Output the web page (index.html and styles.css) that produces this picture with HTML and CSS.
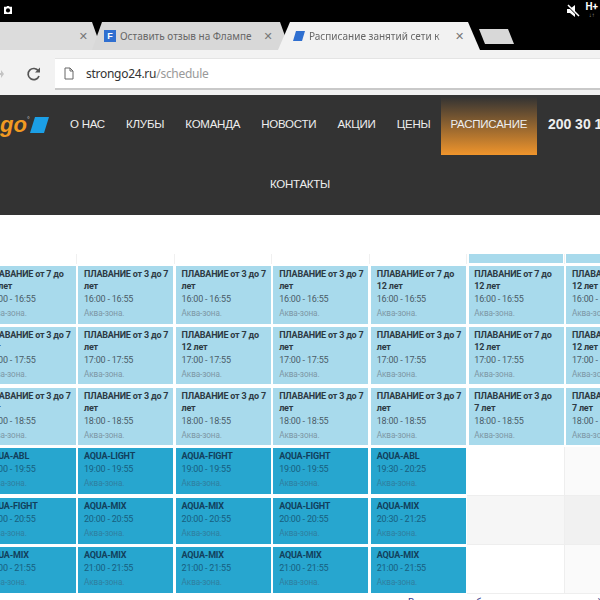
FILE: index.html
```html
<!DOCTYPE html>
<html lang="en">
<head>
  <meta charset="UTF-8" />
  <title>Расписание занятий</title>
  <link rel="stylesheet" href="styles.css">
</head>
<body>
  <!-- Android status bar -->
  <div class="status">
    <svg class="status-shot" width="8" height="8" viewBox="0 0 10 10"><path fill="#fff" d="M0 1h3l1-1h2l1 1h3v9H0z"/><circle cx="5" cy="5.500" r="2.600" fill="#000"/></svg>
    <div class="status-right">
      <svg width="14" height="14" viewBox="0 0 14 14"><path fill="#fff" d="M1 5h3l5-4v12L4 9H1z"/><path stroke="#000" stroke-width="1.500" d="M1 1l12 12"/><path stroke="#fff" stroke-width="1.500" d="M2 1l11 11"/></svg>
      <div class="signal"><b>H+</b><span>↓↑</span></div>
    </div>
  </div>

  <!-- Browser tabs -->
  <div class="tabs">
    <div class="tab tab-first"><span class="tab-close">✕</span></div>
    <div class="tab tab-second">
      <span class="favicon-flamp">F</span>
      <span class="tab-title">Оставить отзыв на Флампе</span>
      <span class="tab-close">✕</span>
    </div>
    <div class="tab tab-active">
      <svg width="12" height="10" viewBox="0 0 12 10"><path fill="#2f6fd0" d="M3 0h9l-3 10H0z"/></svg>
      <span class="tab-title tab-title-cut">Расписание занятий сети к</span>
      <span class="tab-close">✕</span>
    </div>
    <div class="tab-new"></div>
  </div>

  <!-- Browser toolbar -->
  <div class="toolbar">
    <svg class="forward" width="4" height="8" viewBox="0 0 4 8"><path fill="#c4c4c4" d="M0 3h1V0l3 4-3 4V5H0z"/></svg>
    <svg class="reload" width="16" height="16" viewBox="0 0 16 16"><path fill="none" stroke="#555" stroke-width="1.700" d="M13 10a5.600 5.600 0 1 1-.6-5"/><path fill="#555" d="M14 1.500v5h-5z"/></svg>
    <div class="urlbar">
      <svg width="10" height="13" viewBox="0 0 10 13"><path fill="#fff" stroke="#666" d="M1 1h5l3 3v8H1z"/><path fill="none" stroke="#666" d="M6 1v3h3"/></svg>
      <span class="url">strongo24.ru<span class="url-path">/schedule</span></span>
    </div>
  </div>

  <!-- Site header -->
  <header class="site-header">
    <div class="nav-row">
      <div class="logo">
        <span class="logo-text">go</span><span class="logo-reg">°</span>
        <span class="logo-mark"></span>
      </div>
      <nav class="nav">
        <a>О НАС</a>
        <a>КЛУБЫ</a>
        <a>КОМАНДА</a>
        <a>НОВОСТИ</a>
        <a>АКЦИИ</a>
        <a>ЦЕНЫ</a>
        <a class="active">РАСПИСАНИЕ</a>
      </nav>
      <div class="phone">200 30 11</div>
    </div>
    <div class="nav-row-second"><a>КОНТАКТЫ</a></div>
  </header>

  <!-- Schedule -->
  <main class="schedule">
    <div class="head"></div><div class="head"></div><div class="head"></div><div class="head"></div><div class="head"></div>
    <div class="head"><div class="stub"></div></div>
    <div class="head"><div class="stub"></div></div>

    <div class="cell"><div class="card"><b>ПЛАВАНИЕ от 7 до 12 лет</b><span>16:00 - 16:55</span><small>Аква-зона.</small></div></div>
    <div class="cell"><div class="card"><b>ПЛАВАНИЕ от 3 до 7 лет</b><span>16:00 - 16:55</span><small>Аква-зона.</small></div></div>
    <div class="cell"><div class="card"><b>ПЛАВАНИЕ от 3 до 7 лет</b><span>16:00 - 16:55</span><small>Аква-зона.</small></div></div>
    <div class="cell"><div class="card"><b>ПЛАВАНИЕ от 3 до 7 лет</b><span>16:00 - 16:55</span><small>Аква-зона.</small></div></div>
    <div class="cell"><div class="card"><b>ПЛАВАНИЕ от 7 до 12 лет</b><span>16:00 - 16:55</span><small>Аква-зона.</small></div></div>
    <div class="cell"><div class="card"><b>ПЛАВАНИЕ от 7 до 12 лет</b><span>16:00 - 16:55</span><small>Аква-зона.</small></div></div>
    <div class="cell"><div class="card"><b>ПЛАВАНИЕ от 7 до 12 лет</b><span>16:00 - 16:55</span><small>Аква-зона.</small></div></div>

    <div class="cell"><div class="card"><b>ПЛАВАНИЕ от 3 до 7 лет</b><span>17:00 - 17:55</span><small>Аква-зона.</small></div></div>
    <div class="cell"><div class="card"><b>ПЛАВАНИЕ от 3 до 7 лет</b><span>17:00 - 17:55</span><small>Аква-зона.</small></div></div>
    <div class="cell"><div class="card"><b>ПЛАВАНИЕ от 7 до 12 лет</b><span>17:00 - 17:55</span><small>Аква-зона.</small></div></div>
    <div class="cell"><div class="card"><b>ПЛАВАНИЕ от 3 до 7 лет</b><span>17:00 - 17:55</span><small>Аква-зона.</small></div></div>
    <div class="cell"><div class="card"><b>ПЛАВАНИЕ от 3 до 7 лет</b><span>17:00 - 17:55</span><small>Аква-зона.</small></div></div>
    <div class="cell"><div class="card"><b>ПЛАВАНИЕ от 7 до 12 лет</b><span>17:00 - 17:55</span><small>Аква-зона.</small></div></div>
    <div class="cell"><div class="card"><b>ПЛАВАНИЕ от 7 до 12 лет</b><span>17:00 - 17:55</span><small>Аква-зона.</small></div></div>

    <div class="cell"><div class="card"><b>ПЛАВАНИЕ от 3 до 7 лет</b><span>18:00 - 18:55</span><small>Аква-зона.</small></div></div>
    <div class="cell"><div class="card"><b>ПЛАВАНИЕ от 3 до 7 лет</b><span>18:00 - 18:55</span><small>Аква-зона.</small></div></div>
    <div class="cell"><div class="card"><b>ПЛАВАНИЕ от 3 до 7 лет</b><span>18:00 - 18:55</span><small>Аква-зона.</small></div></div>
    <div class="cell"><div class="card"><b>ПЛАВАНИЕ от 3 до 7 лет</b><span>18:00 - 18:55</span><small>Аква-зона.</small></div></div>
    <div class="cell"><div class="card"><b>ПЛАВАНИЕ от 3 до 7 лет</b><span>18:00 - 18:55</span><small>Аква-зона.</small></div></div>
    <div class="cell"><div class="card"><b>ПЛАВАНИЕ от 3 до<br>7 лет</b><span>18:00 - 18:55</span><small>Аква-зона.</small></div></div>
    <div class="cell"><div class="card"><b>ПЛАВАНИЕ от 3 до<br>7 лет</b><span>18:00 - 18:55</span><small>Аква-зона.</small></div></div>

    <div class="cell"><div class="card aqua"><b>AQUA-ABL</b><span>19:00 - 19:55</span><small>Аква-зона.</small></div></div>
    <div class="cell"><div class="card aqua"><b>AQUA-LIGHT</b><span>19:00 - 19:55</span><small>Аква-зона.</small></div></div>
    <div class="cell"><div class="card aqua"><b>AQUA-FIGHT</b><span>19:00 - 19:55</span><small>Аква-зона.</small></div></div>
    <div class="cell"><div class="card aqua"><b>AQUA-FIGHT</b><span>19:00 - 19:55</span><small>Аква-зона.</small></div></div>
    <div class="cell"><div class="card aqua"><b>AQUA-ABL</b><span>19:30 - 20:25</span><small>Аква-зона.</small></div></div>
    <div class="cell empty"></div>
    <div class="cell empty tint-1"></div>

    <div class="cell"><div class="card aqua"><b>AQUA-FIGHT</b><span>20:00 - 20:55</span><small>Аква-зона.</small></div></div>
    <div class="cell"><div class="card aqua"><b>AQUA-MIX</b><span>20:00 - 20:55</span><small>Аква-зона.</small></div></div>
    <div class="cell"><div class="card aqua"><b>AQUA-MIX</b><span>20:00 - 20:55</span><small>Аква-зона.</small></div></div>
    <div class="cell"><div class="card aqua"><b>AQUA-LIGHT</b><span>20:00 - 20:55</span><small>Аква-зона.</small></div></div>
    <div class="cell"><div class="card aqua"><b>AQUA-MIX</b><span>20:30 - 21:25</span><small>Аква-зона.</small></div></div>
    <div class="cell empty tint-2"></div>
    <div class="cell empty tint-3"></div>

    <div class="cell"><div class="card aqua"><b>AQUA-MIX</b><span>21:00 - 21:55</span><small>Аква-зона.</small></div></div>
    <div class="cell"><div class="card aqua"><b>AQUA-MIX</b><span>21:00 - 21:55</span><small>Аква-зона.</small></div></div>
    <div class="cell"><div class="card aqua"><b>AQUA-MIX</b><span>21:00 - 21:55</span><small>Аква-зона.</small></div></div>
    <div class="cell"><div class="card aqua"><b>AQUA-MIX</b><span>21:00 - 21:55</span><small>Аква-зона.</small></div></div>
    <div class="cell"><div class="card aqua"><b>AQUA-MIX</b><span>21:00 - 21:55</span><small>Аква-зона.</small></div></div>
    <div class="cell empty"></div>
    <div class="cell empty tint-1"></div>
  </main>
  <p class="note">Вы можете выбрать занятие и зал на сайте ф М</p>
</body>
</html>
```

FILE: styles.css
```css
html, body {
  margin: 0;
  padding: 0;
  width: 600px;
  height: 600px;
  overflow: hidden;
  background: #fff;
  font-family: 'Liberation Sans', sans-serif;
}

/* status bar */
.status {
  height: 22px;
  background: #000;
  display: flex;
  justify-content: space-between;
  color: #fff;
}
.status-shot {
  margin: 6px 0 0 4px;
}
.status-right {
  display: flex;
  gap: 5px;
  padding: 2px 2px 0 0;
}
.status-right svg {
  margin-top: 2px;
}
.signal {
  display: flex;
  flex-direction: column;
  align-items: center;
  font-family: 'Roboto', sans-serif;
}
.signal b {
  font-size: 10px;
  line-height: 10px;
}
.signal span {
  font-size: 6px;
  line-height: 6px;
  color: #999;
}

/* tabs */
.tabs {
  height: 28px;
  background: #000;
  display: flex;
  font-family: 'Noto Sans', sans-serif;
  font-size: 10px;
  color: #666;
}
.tab {
  height: 28px;
  display: flex;
  align-items: center;
  box-sizing: border-box;
  background: #dcdcdc;
}
.tab-first {
  width: 102px;
  justify-content: flex-end;
  padding-right: 14px;
  clip-path: polygon(0 0, 92px 0, 102px 28px, 0 28px);
}
.tab-second {
  width: 198px;
  margin-left: -10px;
  padding-left: 12px;
  background: #d8d8d8;
  clip-path: polygon(10px 0, 188px 0, 198px 28px, 0 28px);
}
.tab-active {
  width: 202px;
  margin-left: -12px;
  padding-left: 15px;
  background: #f2f2f2;
  clip-path: polygon(12px 0, 190px 0, 202px 28px, 0 28px);
}
.tab-close {
  font-size: 11px;
  color: #777;
  font-family: 'DejaVu Sans', sans-serif;
}
.tab-second .tab-close {
  margin-left: 12px;
}
.tab-active .tab-close {
  margin-left: 5px;
}
.tab-title {
  white-space: nowrap;
  overflow: hidden;
  margin-left: 4px;
}
.tab-title-cut {
  width: 141px;
  -webkit-mask-image: linear-gradient(to right, #000 90%, transparent);
  mask-image: linear-gradient(to right, #000 90%, transparent);
}
.favicon-flamp {
  width: 12px;
  height: 12px;
  background: #2f6fd0;
  color: #fff;
  font: bold 9px/12px 'Liberation Sans', sans-serif;
  text-align: center;
}
.tab-new {
  width: 35px;
  height: 15px;
  margin: 7px 0 0 -1px;
  background: #d8d8d8;
  clip-path: polygon(0 0, 29px 0, 35px 15px, 6px 15px);
}

/* toolbar */
.toolbar {
  height: 45px;
  box-sizing: border-box;
  background: #f2f2f2;
  display: flex;
  align-items: center;
  padding-top: 2px;
}
.forward {
  margin-right: 22px;
  flex-shrink: 0;
}
.reload {
  margin-right: 13px;
}
.urlbar {
  flex: 1;
  height: 32px;
  box-sizing: border-box;
  background: #fff;
  border-top: 1px solid #e4e4e4;
  border-bottom: 2px solid #c9c9c9;
  display: flex;
  align-items: center;
  gap: 12px;
  padding-left: 9px;
}
.url {
  font-family: 'Noto Sans', sans-serif;
  font-size: 12px;
  letter-spacing: -0.27px;
  color: #333;
}
.url-path {
  color: #999;
}

/* site header */
.site-header {
  background: #333;
  height: 120px;
  color: #eee;
  font-size: 11.500px;
  letter-spacing: -0.25px;
}
.nav-row {
  height: 60px;
  display: flex;
  align-items: center;
}
.logo {
  width: 49px;
  height: 18px;
  display: flex;
  align-items: center;
  flex-shrink: 0;
  margin-right: 10px;
}
.logo-text {
  font-weight: bold;
  font-style: italic;
  font-size: 22px;
  letter-spacing: 0;
  color: #f19a22;
}
.logo-reg {
  font-size: 7px;
  align-self: flex-start;
  color: #ccc;
}
.logo-mark {
  width: 19px;
  height: 16px;
  background: #1b9fe6;
  clip-path: polygon(5px 0, 100% 0, 14px 100%, 0 100%);
  margin-left: auto;
}
.nav {
  display: flex;
  align-items: center;
}
.nav a {
  padding: 0 10.200px 2px 11px;
  white-space: nowrap;
}
.nav .active {
  height: 58px;
  box-sizing: border-box;
  margin: 2px 0 0 0;
  padding: 0 9.800px 4px;
  display: flex;
  align-items: center;
  background: linear-gradient(#333, #f0952c);
}
.phone {
  margin-left: 11px;
  font-size: 14px;
  letter-spacing: 0;
  font-weight: bold;
  white-space: nowrap;
  padding-bottom: 3px;
}
.nav-row-second {
  height: 60px;
  display: flex;
  justify-content: center;
  align-items: center;
  padding-bottom: 2px;
  box-sizing: border-box;
}

/* schedule table */
.schedule {
  margin: 39px 0 0 -20.600px;
  display: grid;
  grid-template-columns: repeat(7, 97.600px);
  grid-template-rows: 10.400px 60.800px 60.800px 60.800px 49.200px 49.200px 49.200px;
  font-family: 'Roboto', sans-serif;
}
.head {
  border-right: 1px solid #f0f0f0;
  padding: 0 1.300px;
  box-sizing: border-box;
}
.stub {
  height: 8.600px;
  background: #a8daec;
}
.cell {
  padding: 1.600px 1.300px;
  box-sizing: border-box;
  min-width: 0;
}
.card {
  height: 100%;
  box-sizing: border-box;
  padding: 2px 3px 0 5.700px;
  background: #a8daec;
  color: #2d3a44;
  display: flex;
  flex-direction: column;
  overflow: hidden;
}
.card b {
  font-size: 9px;
  line-height: 12px;
  letter-spacing: -0.2px;
}
.card span {
  font-size: 9px;
  line-height: 13px;
  letter-spacing: -0.2px;
  color: #4a5c68;
  margin-top: 1px;
}
.card small {
  font-size: 8.200px;
  line-height: 15px;
  letter-spacing: -0.1px;
  color: #7d97a5;
}
.card.aqua {
  background: #27a6cf;
  color: #12405c;
}
.aqua span {
  color: #175f80;
}
.aqua small {
  color: #2f7fa0;
}
.empty {
  border-right: 1px solid #eee;
  border-bottom: 1px solid #eee;
}
.tint-1 {
  background: #fafafa;
}
.tint-2 {
  background: #f6f6f6;
}
.tint-3 {
  background: #f1f1f1;
}
.note {
  margin: 3px 0 0 408px;
  font-family: 'Roboto', sans-serif;
  font-size: 10px;
  color: #33408f;
  white-space: nowrap;
}
```
